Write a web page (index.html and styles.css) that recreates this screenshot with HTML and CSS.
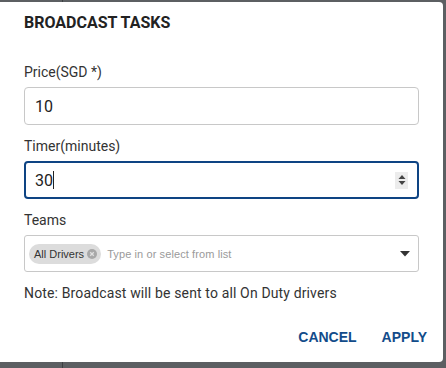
FILE: index.html
```html
<!DOCTYPE html>
<html lang="en">
<head>
  <meta charset="UTF-8">
  <title>Broadcast Tasks</title>
  <link rel="stylesheet" href="styles.css">
</head>
<body>
  <div class="backdrop">
    <div class="dialog">
      <h2 class="dialog-title">BROADCAST TASKS</h2>

      <div class="field">
        <label class="field-label">Price(SGD *)</label>
        <div class="text-input">10</div>
      </div>

      <div class="field">
        <label class="field-label">Timer(minutes)</label>
        <div class="text-input focused">
          <span>30<span class="caret"></span></span>
          <span class="spinner">
            <svg width="8" height="12" viewBox="0 0 8 12"><path d="M4 1 L7.5 5 H0.5 Z M4 11 L7.5 7 H0.5 Z" fill="#444"/></svg>
          </span>
        </div>
      </div>

      <div class="field">
        <label class="field-label">Teams</label>
        <div class="select-input">
          <span class="chip">All Drivers
            <svg class="chip-x" width="10" height="10" viewBox="0 0 10 10"><circle cx="5" cy="5" r="5" fill="#a8a8a8"/><path d="M3.2 3.2 L6.8 6.8 M6.8 3.2 L3.2 6.8" stroke="#e0e0e0" stroke-width="1.3"/></svg>
          </span>
          <span class="placeholder">Type in or select from list</span>
          <svg class="dropdown" width="10" height="6" viewBox="0 0 10 6"><path d="M0 0 H10 L5 5.5 Z" fill="#333"/></svg>
        </div>
      </div>

      <p class="note">Note: Broadcast will be sent to all On Duty drivers</p>

      <div class="actions">
        <button class="btn">CANCEL</button>
        <button class="btn">APPLY</button>
      </div>
    </div>
  </div>
</body>
</html>
```

FILE: styles.css
```css
body {
  margin: 0;
  background: linear-gradient(to right, transparent 62px, #3c3f42 62px, #3c3f42 63px, transparent 63px), #5c5f62;
  font-family: Roboto, "Liberation Sans", sans-serif;
  color: #333;
  height: 368px;
  overflow: hidden;
}

.backdrop {
  padding-top: 2px;
}

.dialog {
  background: #fff;
  width: 443px;
  height: 360px;
  box-sizing: border-box;
  padding: 11px 24px 0 24px;
  border-radius: 0 4px 4px 0;
}

.dialog-title {
  margin: 0 0 32px 0;
  font-family: Roboto, "Liberation Sans", sans-serif;
  font-size: 16px;
  font-weight: bold;
  line-height: 19px;
  color: #222;
}

.field {
  margin-bottom: 13px;
}

.field-label {
  display: block;
  font-size: 14px;
  line-height: 17px;
  color: #333;
  margin-bottom: 6px;
}

.text-input {
  height: 38px;
  box-sizing: border-box;
  border: 1px solid #c8c8c8;
  border-radius: 4px;
  padding: 0 10px;
  display: flex;
  align-items: center;
  justify-content: space-between;
  font-size: 16px;
  color: #222;
}

.text-input.focused {
  border: 2px solid #0e4483;
  padding: 0 9px;
}

.caret {
  display: inline-block;
  width: 1px;
  height: 18px;
  background: #222;
  vertical-align: -3px;
}

.spinner {
  display: flex;
  align-items: center;
  justify-content: center;
  width: 13px;
  height: 17px;
  background: #ececec;
}

.select-input {
  height: 37px;
  box-sizing: border-box;
  border: 1px solid #c8c8c8;
  border-radius: 3px;
  padding: 0 8px 0 4px;
  display: flex;
  align-items: center;
  font-family: "Liberation Sans", Arial, sans-serif;
  font-size: 11px;
}

.chip {
  display: inline-flex;
  align-items: center;
  height: 20px;
  padding: 0 4px 0 5px;
  background: #dcdcdc;
  border-radius: 10px;
  color: #333;
}

.chip-x {
  margin-left: 3px;
}

.placeholder {
  flex: 1;
  margin-left: 6px;
  color: #9a9a9a;
  letter-spacing: 0.1px;
}

.note {
  margin: 13px 0 0 0;
  font-size: 14px;
  line-height: 17px;
  letter-spacing: 0.14px;
  color: #333;
}

.actions {
  display: flex;
  justify-content: flex-end;
  gap: 25px;
  margin-top: 27px;
  margin-right: -8px;
}

.btn {
  background: none;
  border: none;
  padding: 0;
  font-family: "Liberation Sans", Arial, sans-serif;
  font-size: 14px;
  line-height: 16px;
  font-weight: bold;
  color: #124c8a;
  cursor: pointer;
}
```
